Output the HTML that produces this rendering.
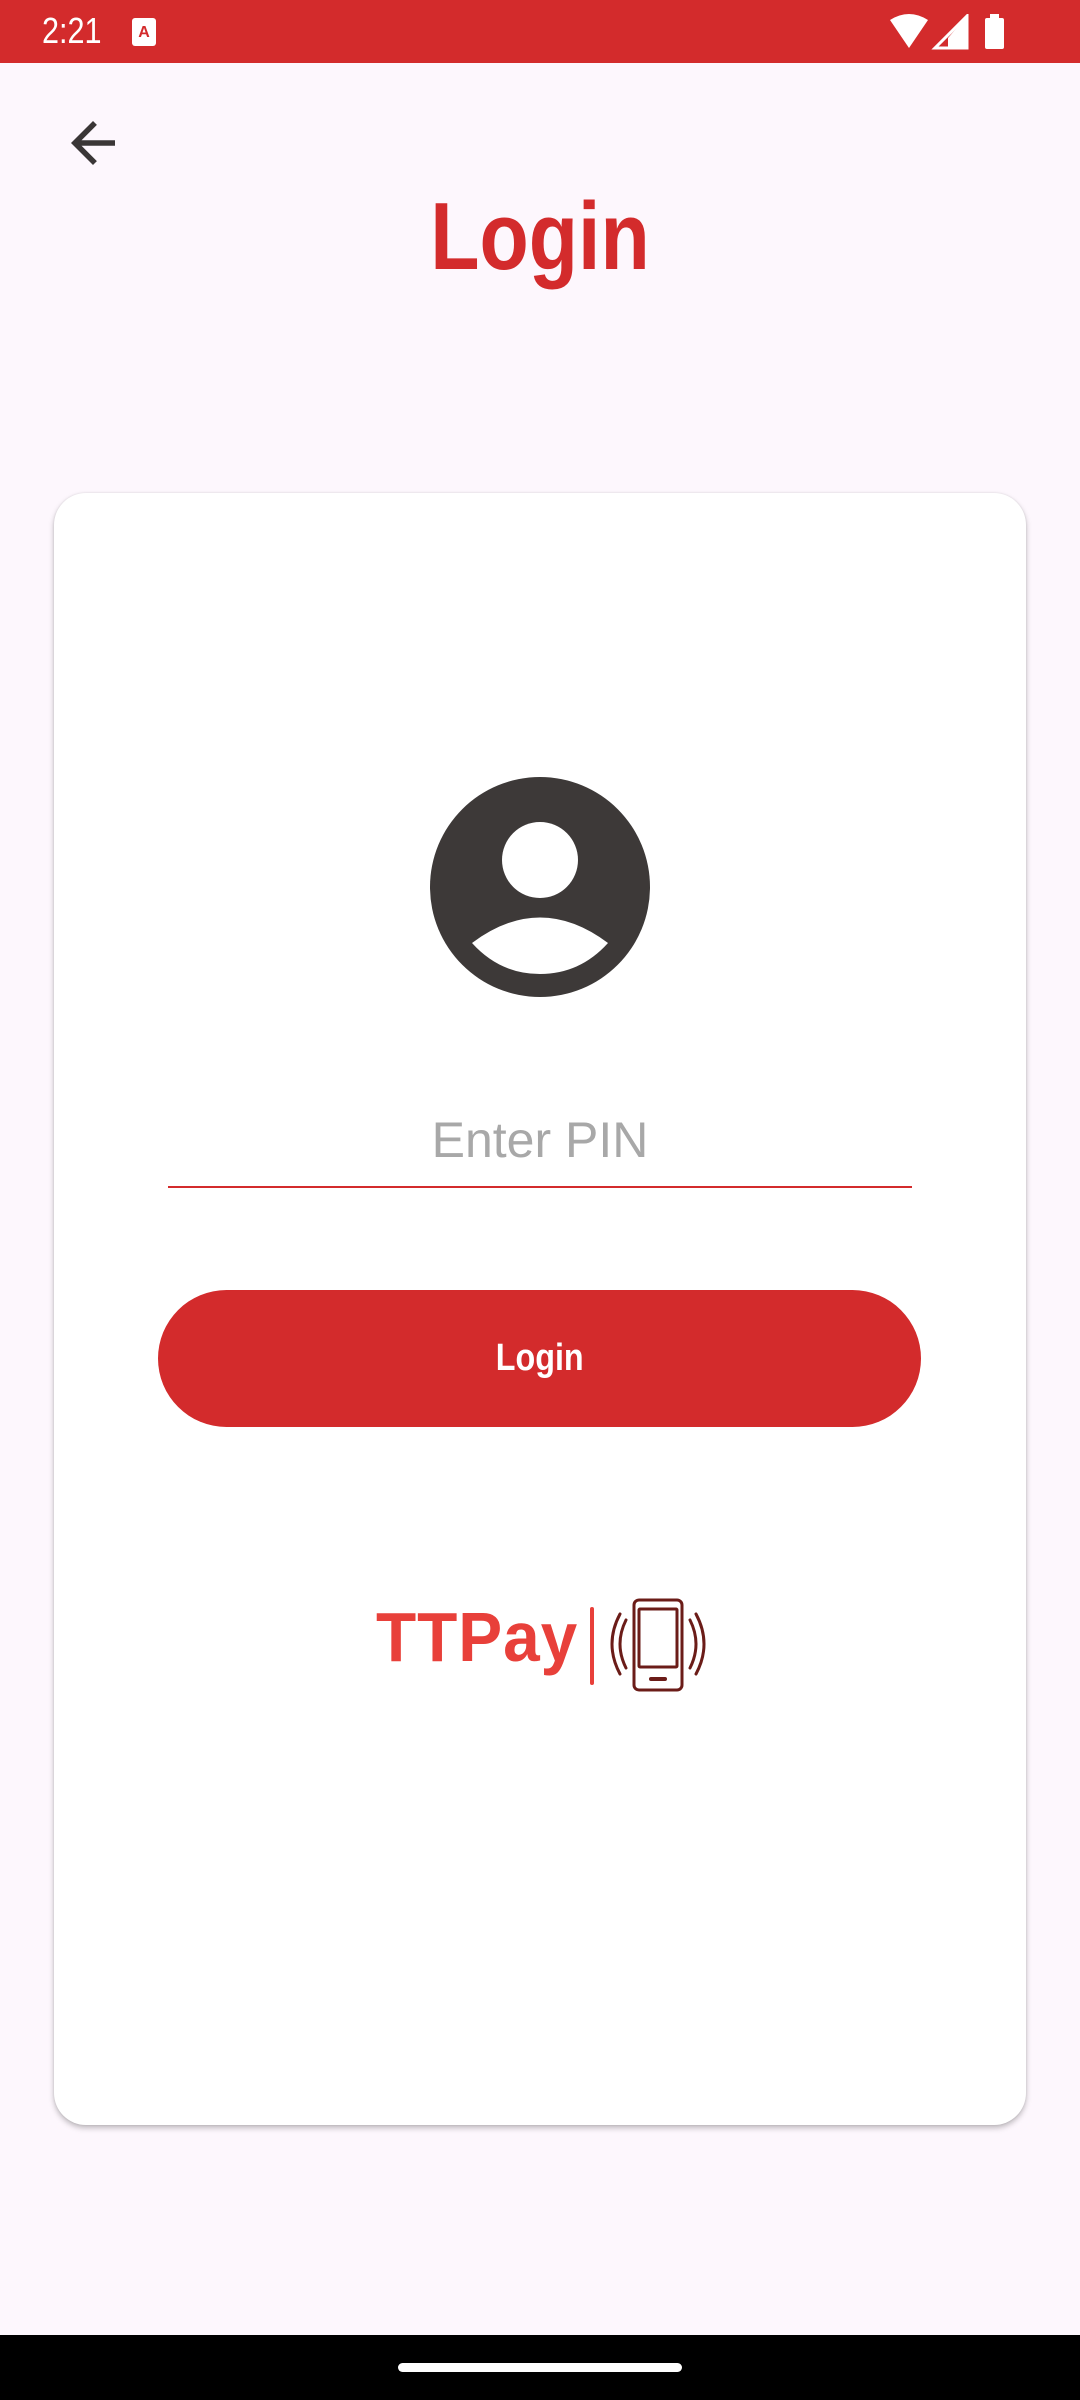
<!DOCTYPE html>
<html><head><meta charset="utf-8"><style>
*{margin:0;padding:0;box-sizing:border-box}
html,body{width:1080px;height:2400px;overflow:hidden}
body{background:#fdf7fd;position:relative;font-family:"Liberation Sans",sans-serif}
.sb{position:absolute;left:0;top:0;width:1080px;height:63px;background:#d32b2c;color:#fff}
.time{position:absolute;left:42px;top:10px;font-size:36px;transform:scaleX(0.85);transform-origin:left}
.card{position:absolute;left:54px;top:493px;width:972px;height:1632px;background:#fff;border-radius:32px;box-shadow:0 3px 6px rgba(0,0,0,.25),0 0 2px rgba(0,0,0,.1)}
.title{position:absolute;left:0;width:1080px;top:182px;text-align:center;font-size:96px;font-weight:bold;color:#d32b2c;line-height:110px;transform:scaleX(0.84)}
.pin{position:absolute;left:168px;width:744px;top:1108px;text-align:center;font-size:50px;color:#a8a8a8;line-height:64px}
.line{position:absolute;left:168px;width:744px;top:1186px;height:2px;background:#d32b2c}
.btn{position:absolute;left:158px;top:1290px;width:763px;height:137px;border-radius:69px;background:#d32b2c;color:#fff;font-weight:bold;font-size:38px;text-align:center;line-height:137px}
.btn span{display:inline-block;transform:scaleX(0.85)}
.nav{position:absolute;left:0;top:2335px;width:1080px;height:65px;background:#000}
.handle{position:absolute;left:398px;top:2363px;width:284px;height:9px;border-radius:5px;background:#fff}
.tt{position:absolute;left:376px;top:1592px;font-size:70px;font-weight:bold;color:#e8403a;line-height:90px;transform:scaleX(0.94);transform-origin:left;letter-spacing:1px}
</style></head><body>
<div class="sb"><div class="time">2:21</div>
<svg style="position:absolute;left:132px;top:18px" width="24" height="28"><rect x="0" y="0" width="24" height="28" rx="3" fill="#fff"/><text x="12" y="19" font-size="16" font-weight="bold" fill="#d32b2c" text-anchor="middle" font-family="Liberation Sans">A</text></svg>
<svg style="position:absolute;left:888px;top:14px" width="120" height="36" viewBox="0 0 120 36">
<path d="M2 6 Q21 -6 40 6 L21 34 Z" fill="#fff"/>
<path d="M79 2 L79 34 L47 34 Z" fill="none" stroke="#fff" stroke-width="3"/><path d="M79 2 L79 34 L60 34 L60 24 Z" fill="#fff"/>
<rect x="97" y="4" width="19" height="31" rx="2" fill="#fff"/><rect x="102" y="0" width="9" height="5" fill="#fff"/>
</svg></div>
<svg style="position:absolute;left:60px;top:110px" width="66" height="66" viewBox="0 0 24 24"><path d="M20 11H7.83l5.59-5.59L12 4l-8 8 8 8 1.41-1.41L7.83 13H20v-2z" fill="#3a3636"/></svg>
<div class="title">Login</div>
<div class="card"></div>
<svg style="position:absolute;left:430px;top:777px" width="220" height="220" viewBox="0 0 220 220">
<circle cx="110" cy="110" r="110" fill="#3d3938"/>
<circle cx="110" cy="83" r="38" fill="#fff"/>
<path d="M42 166 Q110 115 178 166 Q150 197 110 197 Q70 197 42 166Z" fill="#fff"/>
</svg>
<div class="pin">Enter PIN</div>
<div class="line"></div>
<div class="btn"><span>Login</span></div>
<div class="tt">TTPay</div>
<div style="position:absolute;left:590px;top:1607px;width:4px;height:78px;background:#e8403a;border-radius:2px"></div>
<svg style="position:absolute;left:608px;top:1598px" width="100" height="94" viewBox="0 0 100 94" fill="none" stroke="#6b1c18" stroke-width="3" stroke-linecap="round">
<rect x="26" y="2" width="48" height="90" rx="5"/><rect x="31" y="11" width="38" height="58" rx="1"/><line x1="43" y1="81" x2="57" y2="81" stroke-width="4"/>
<path d="M18 22 Q6 46 18 70"/><path d="M12 16 Q-4 46 12 76"/><path d="M82 22 Q94 46 82 70"/><path d="M88 16 Q104 46 88 76"/>
</svg>
<div class="nav"></div><div class="handle"></div>
</body></html>
